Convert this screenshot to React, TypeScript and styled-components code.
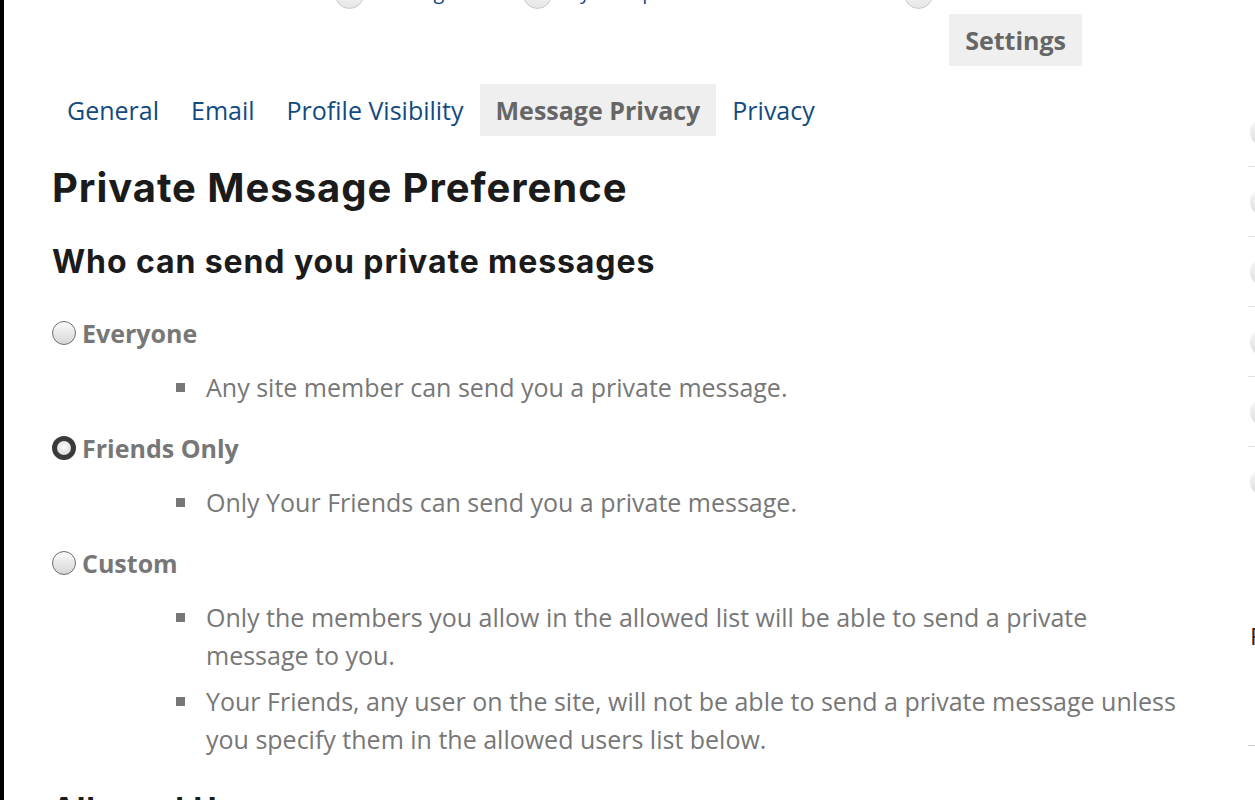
import React from 'react';
import styled, { createGlobalStyle } from 'styled-components';

const GlobalStyle = createGlobalStyle`
  html, body {
    margin: 0;
    padding: 0;
    background: #fff;
    height: 800px;
    overflow: hidden;
  }
  body {
    font-family: 'Open Sans', 'Liberation Sans', sans-serif;
  }
`;

const Page = styled.div`
  display: flex;
  height: 800px;
  overflow: hidden;
`;

const Rail = styled.div`
  width: 4px;
  flex: none;
  background: #000;
`;

const Main = styled.main`
  width: 1244px;
  flex: none;
  padding-left: 48px;
  box-sizing: border-box;
`;

const TopNav = styled.nav`
  height: 9px;
  overflow: hidden;
  display: flex;
  align-items: flex-end;
  padding-left: 283px;
`;

const NavItem = styled.div<{ $width: number }>`
  width: ${(p) => p.$width}px;
  flex: none;
  display: flex;
  align-items: flex-end;
  gap: 10px;
`;

const NavText = styled.span`
  color: #124a80;
  font-size: 20px;
  line-height: 26px;
  margin-bottom: 4px;
  white-space: nowrap;
`;

const NavDot = styled.span`
  width: 27px;
  height: 27px;
  flex: none;
  border-radius: 50%;
  border: 1px solid #c8c8c8;
  background: linear-gradient(#fdfdfd, #e6e6e6);
`;

const SettingsBar = styled.div`
  display: flex;
  justify-content: flex-end;
  padding: 5px 166px 0 0;
`;

const TabButton = styled.div<{ $active?: boolean }>`
  padding: 0 16px;
  height: 52px;
  display: flex;
  align-items: center;
  font-size: 25px;
  font-weight: ${(p) => (p.$active ? 700 : 400)};
  color: ${(p) => (p.$active ? '#666' : '#124a80')};
  background: ${(p) => (p.$active ? '#efefef' : 'transparent')};
`;

const Tabs = styled.div`
  display: flex;
  margin-top: 18px;
  margin-left: -1px;
`;

const Title = styled.h1`
  font-family: Inter, 'DejaVu Sans', sans-serif;
  font-weight: 700;
  font-size: 40px;
  letter-spacing: 0.95px;
  color: #1b1b1b;
  margin: 30px 0 0 0;
  line-height: 44px;
`;

const Subtitle = styled.h2`
  font-family: Inter, 'DejaVu Sans', sans-serif;
  font-weight: 700;
  font-size: 32px;
  letter-spacing: 0.9px;
  color: #1b1b1b;
  margin: 34px 0 0 0;
  line-height: 36px;
`;

const Options = styled.div`
  margin-top: 34px;
`;

const Option = styled.div`
  margin-bottom: 23px;
`;

const OptionLabel = styled.label`
  display: flex;
  align-items: center;
  gap: 6px;
  font-size: 25px;
  font-weight: 700;
  color: #777;
  height: 38px;
`;

const Radio = styled.span<{ $checked?: boolean }>`
  width: 24px;
  height: 24px;
  box-sizing: border-box;
  border-radius: 50%;
  flex: none;
  border: ${(p) => (p.$checked ? '5px solid #3a3a3a' : '1.5px solid #6f6f6f')};
  background: ${(p) =>
    p.$checked
      ? 'radial-gradient(circle at 50% 40%, #fff, #cfcfcf)'
      : 'linear-gradient(#fbfbfb, #d6d6d6)'};
`;

const Notes = styled.ul`
  list-style: none;
  margin: 16px 0 0 0;
  padding: 0 0 0 124px;
`;

const Note = styled.li`
  position: relative;
  padding-left: 30px;
  font-size: 25px;
  line-height: 38px;
  color: #777;
  margin-bottom: 8px;
  max-width: 984px;

  &::before {
    content: '';
    position: absolute;
    left: 0;
    top: 15px;
    width: 9px;
    height: 9px;
    background: #777;
  }
`;

const SectionTail = styled.h3`
  font-family: Inter, 'DejaVu Sans', sans-serif;
  font-weight: 700;
  font-size: 32px;
  letter-spacing: 0.9px;
  color: #1b1b1b;
  margin: 32px 0 0 0;
`;

const Sidebar = styled.aside`
  position: relative;
  flex: 1;
  padding-top: 97px;
`;

const SideRow = styled.div<{ $last?: boolean }>`
  height: 70px;
  border-bottom: ${(p) => (p.$last ? 'none' : '1px solid #e2e2e2')};
  box-sizing: border-box;
  display: flex;
  align-items: center;
  padding-left: 2px;
`;

const SideDot = styled.span`
  width: 28px;
  height: 28px;
  flex: none;
  border-radius: 50%;
  background: linear-gradient(#fafafa, #dcdcdc);
`;

const SideLetter = styled.div`
  margin-top: 102px;
  padding-left: 2px;
  font-size: 24px;
  line-height: 33px;
  color: #222;
  height: 126px;
  border-bottom: 1px solid #ccc;
`;

const SideTop = styled.div`
  position: absolute;
  top: 7px;
  right: 0;
  width: 6px;
  height: 2px;
  background: #124a80;
`;

const tabs = ['General', 'Email', 'Profile Visibility', 'Message Privacy', 'Privacy'];

const options = [
  { label: 'Everyone', checked: false, notes: ['Any site member can send you a private message.'] },
  { label: 'Friends Only', checked: true, notes: ['Only Your Friends can send you a private message.'] },
  {
    label: 'Custom',
    checked: false,
    notes: [
      'Only the members you allow in the allowed list will be able to send a private message to you.',
      'Your Friends, any user on the site, will not be able to send a private message unless you specify them in the allowed users list below.'
    ]
  }
];

export default function App (): React.ReactElement {
  return (
    <>
      <GlobalStyle />
      <Page>
        <Rail />
        <Main>
          <TopNav>
            <NavItem $width={188}><NavDot /><NavText>Messages</NavText></NavItem>
            <NavItem $width={381}><NavDot /><NavText>My Groups</NavText></NavItem>
            <NavItem $width={200}><NavDot /><NavText>Home</NavText></NavItem>
          </TopNav>
          <SettingsBar>
            <TabButton $active>Settings</TabButton>
          </SettingsBar>
          <Tabs>
            {tabs.map((t) => (
              <TabButton key={t} $active={t === 'Message Privacy'}>{t}</TabButton>
            ))}
          </Tabs>
          <Title>Private Message Preference</Title>
          <Subtitle>Who can send you private messages</Subtitle>
          <Options>
            {options.map((o) => (
              <Option key={o.label}>
                <OptionLabel>
                  <Radio $checked={o.checked} />
                  {o.label}
                </OptionLabel>
                <Notes>
                  {o.notes.map((n) => <Note key={n}>{n}</Note>)}
                </Notes>
              </Option>
            ))}
          </Options>
          <SectionTail>Allowed Users</SectionTail>
        </Main>
        <Sidebar>
          <SideTop />
          {[0, 1, 2, 3, 4, 5].map((i) => (
            <SideRow key={i} $last={i === 5}><SideDot /></SideRow>
          ))}
          <SideLetter>F</SideLetter>
        </Sidebar>
      </Page>
    </>
  );
}
